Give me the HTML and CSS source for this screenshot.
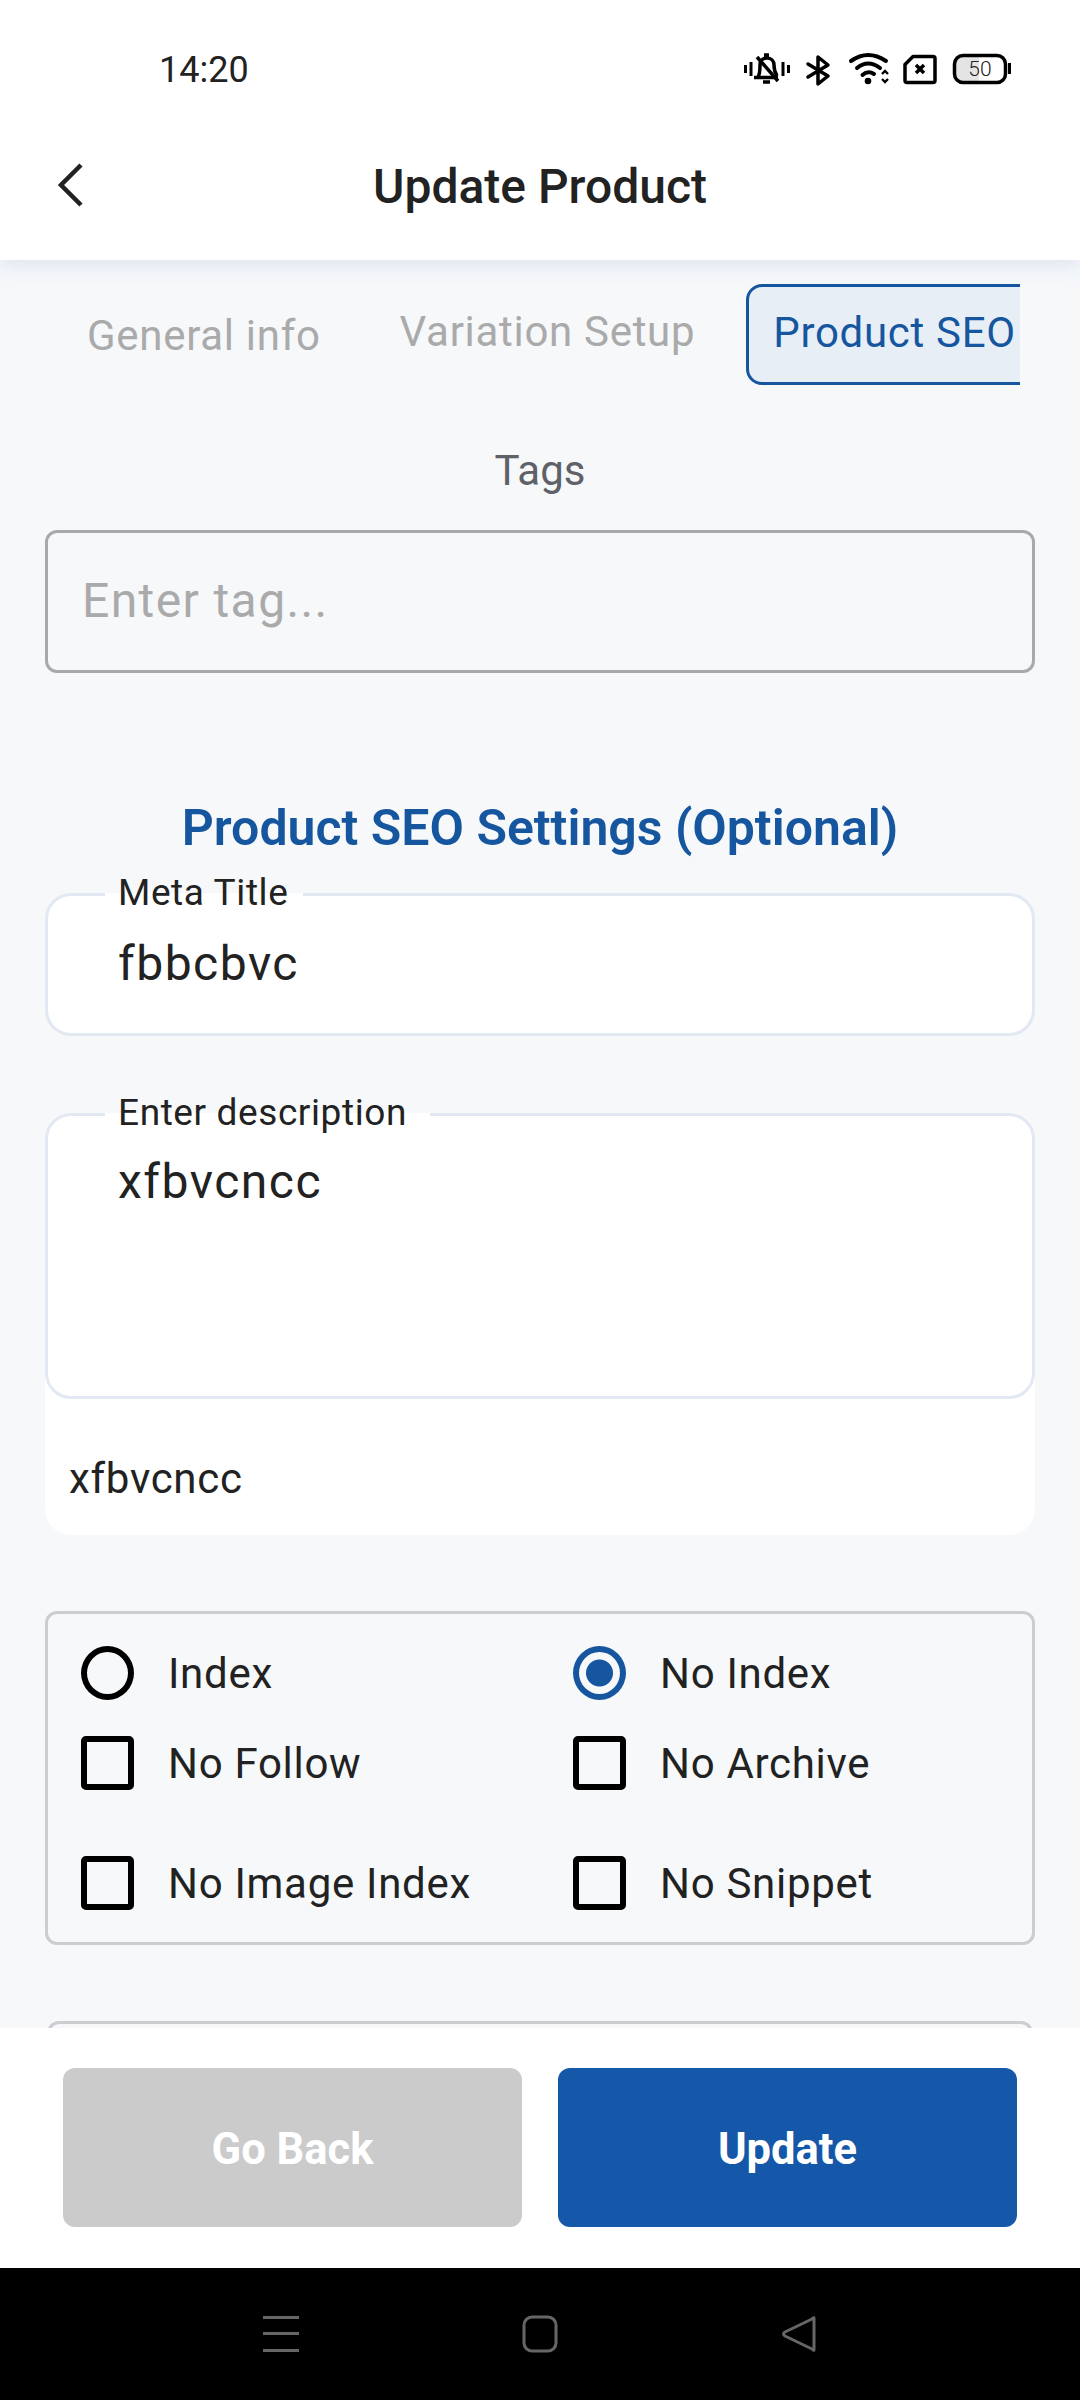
FILE: index.html
```html
<!DOCTYPE html>
<html lang="en">
<head>
<meta charset="utf-8">
<title>Update Product</title>
<link rel="stylesheet" href="styles.css">
</head>
<body>
<div class="screen">
  <div class="top">
    <div class="status">
      <span class="time">14:20</span>
      <svg class="status-icons" width="340" height="80" viewBox="0 0 340 80" fill="none" stroke="#000">
        <g stroke-width="3.500">
          <path d="M45.500 35v8M51 32v14M83 32v14M88.500 35v8" stroke-width="3"/>
          <path d="M54 47.500h24M58 47c2-3 2-7 2-12 0-4 3-7 7-7s7 3 7 7c0 5 1 8 3 11M64 25h5M63 52h7"/>
          <path d="M57 27l21 24"/>
        </g>
        <path d="M108 34l20 12-10 8V27l10 8-20 12" stroke-width="3.500" stroke-linejoin="round" stroke-linecap="round"/>
        <g stroke-width="4" stroke-linecap="round">
          <path d="M151 31Q168 19 186 31"/>
          <path d="M157 38Q168 29 180 38"/>
          <path d="M162.500 45Q168 40 174 44"/>
        </g>
        <circle cx="168" cy="51" r="3.300" fill="#000" stroke="none"/>
        <path d="M182 44l3-3 3 3M182 49l3 3 3-3" stroke-width="2.400"/>
        <path d="M213 26.500h20a2 2 0 0 1 2 2v22a2 2 0 0 1-2 2h-26a2 2 0 0 1-2-2V34.500z" stroke-width="3.500" stroke-linejoin="round"/>
        <path d="M216 35l8 8M224 35l-8 8" stroke-width="3.500"/>
        <path d="M263 26.500h16v25h-16a8 8 0 0 1-8-8v-9a8 8 0 0 1 8-8z" fill="#e4e4e4" stroke="none"/>
        <rect x="254.500" y="25.500" width="51" height="27" rx="8.500" stroke-width="3.500"/>
        <path d="M309.500 33v11" stroke-width="3"/>
        <text class="battery-text" x="280" y="46" text-anchor="middle">50</text>
      </svg>
    </div>
    <header class="app-bar">
      <svg class="back" width="28" height="44" viewBox="0 0 28 44" fill="none" stroke="#222"><path d="M25 2L5 22l20 20" stroke-width="4.500"/></svg>
      <h1 class="app-title">Update Product</h1>
    </header>
  </div>

  <main class="content">
    <div class="tabs">
      <span class="tab tab-general">General info</span>
      <span class="tab tab-variation">Variation Setup</span>
      <span class="tab tab-active">Product SEO</span>
    </div>

    <div class="tags-label">Tags</div>
    <div class="tag-input">Enter tag...</div>

    <h2 class="section-title">Product SEO Settings (Optional)</h2>

    <div class="field field-meta">
      <span class="legend">Meta Title</span>
      <span class="value">fbbcbvc</span>
    </div>

    <div class="desc-wrap">
      <div class="field field-desc">
        <span class="legend legend-wide">Enter description</span>
        <span class="value">xfbvcncc</span>
      </div>
      <div class="preview">xfbvcncc</div>
    </div>

    <div class="options">
      <div class="option"><span class="radio"></span><span>Index</span></div>
      <div class="option"><span class="radio radio-on"></span><span>No Index</span></div>
      <div class="option"><span class="check"></span><span>No Follow</span></div>
      <div class="option"><span class="check"></span><span>No Archive</span></div>
      <div class="option"><span class="check"></span><span>No Image Index</span></div>
      <div class="option"><span class="check"></span><span>No Snippet</span></div>
    </div>

    <div class="next-box"></div>
  </main>

  <footer class="actions">
    <button class="btn btn-back">Go Back</button>
    <button class="btn btn-update">Update</button>
  </footer>

  <nav class="nav">
    <svg class="nav-icon" width="36" height="38" viewBox="0 0 36 38" fill="#666"><rect y="1" width="36" height="3"/><rect y="17" width="36" height="3"/><rect y="34" width="36" height="3"/></svg>
    <svg class="nav-icon" width="36" height="38" viewBox="0 0 36 38" fill="none" stroke="#666"><rect x="2" y="2" width="32" height="34" rx="8" stroke-width="3"/></svg>
    <svg class="nav-icon" width="36" height="38" viewBox="0 0 36 38" fill="none" stroke="#666"><path d="M33 3Q33 2 31 4L4 17Q1 19 4 21L31 34Q33 36 33 35z" stroke-width="3" stroke-linejoin="round"/></svg>
  </nav>
</div>
</body>
</html>
```
FILE: styles.css
```css
* { box-sizing: border-box; }
html, body { margin: 0; padding: 0; }
body { font-family: Roboto, "Liberation Sans", sans-serif; background: #f6f8fa; color: #222; }
.screen { width: 1080px; height: 2400px; display: flex; flex-direction: column; overflow: hidden; background: #f6f8fa; }

.top { height: 260px; background: #fff; box-shadow: 0 4px 20px rgba(150, 170, 205, .28); position: relative; z-index: 1; flex: none; }
.status { height: 130px; display: flex; align-items: flex-start; justify-content: space-between; position: relative; }
.time { font-size: 36px; line-height: 42px; margin: 49px 0 0 159px; color: #222; }
.status-icons { margin: 30px 40px 0 0; }
.battery-text { font-family: Roboto, sans-serif; font-size: 21px; font-weight: 300; fill: #222; stroke: none; }

.app-bar { height: 110px; padding-top: 3px; display: flex; align-items: center; justify-content: center; position: relative; }
.back { position: absolute; left: 56px; top: 33px; }
.app-title { font-size: 48px; font-weight: 500; margin: 0; color: #222; line-height: 56px; }

.content { flex: 1; min-height: 0; overflow: hidden; padding: 24px 45px 0; }

.tabs { height: 102px; width: 975px; overflow: hidden; position: relative; display: flex; align-items: flex-start; color: #aaa; font-size: 42px; line-height: 48px; padding-left: 42px; }
.tab { white-space: nowrap; flex: none; letter-spacing: .7px; }
.tab-general { margin-top: 28px; }
.tab-variation { margin: 24px 0 0 79px; }
.tab-active { margin-left: 51px; height: 101px; width: 400px; border: 3px solid #15569f; border-radius: 16px; background: #e8eef6; color: #15569f; padding: 22px 0 0 24px; }

.tags-label { text-align: center; font-size: 42px; line-height: 48px; color: #5e6167; margin-top: 61px; }
.tag-input { margin-top: 35px; height: 143px; border: 3px solid #a9a9a9; border-radius: 12px; font-size: 48px; line-height: 136px; color: #aaa; padding-left: 34px; letter-spacing: 1.400px; }

.section-title { margin: 127px 0 0; text-align: center; font-size: 50px; line-height: 56px; font-weight: 600; color: #15569f; }

.field { border: 3px solid #e2e9f2; border-radius: 26px; background: #fff; position: relative; padding-left: 70px; }
.legend { position: absolute; left: 57px; top: -21px; padding: 0 15px 0 13px; background: linear-gradient(#f6f8fa 50%, #fff 50%); font-size: 37px; line-height: 36px; letter-spacing: .6px; color: #222; white-space: nowrap; }
.legend-wide { padding-right: 23px; }
.value { display: block; font-size: 48px; line-height: 56px; color: #222; letter-spacing: 1.500px; }
.field-meta { margin-top: 37px; height: 143px; padding-top: 40px; }
.desc-wrap { margin-top: 77px; height: 422px; background: #fff; border-radius: 26px; }
.field-desc { height: 286px; padding-top: 38px; }
.preview { font-size: 42px; line-height: 48px; color: #222; padding: 56px 0 0 24px; letter-spacing: .7px; }

.options { margin-top: 76px; height: 334px; border: 3px solid #cbcdd0; border-radius: 12px; display: grid; grid-template-columns: 492px 1fr; grid-template-rows: 90px 120px 1fr; padding: 32px 0 0 33px; }
.option { display: flex; align-items: flex-start; font-size: 42px; line-height: 56px; letter-spacing: .7px; color: #222; column-gap: 34px; }
.radio, .check { width: 53px; height: 54px; flex: none; border: 6px solid #000; }
.radio { border-radius: 50%; }
.radio-on { border-color: #15569f; background: radial-gradient(circle, #15569f 0 13px, transparent 14px); }
.check { border-radius: 5px; }

.next-box { margin: 76px 2px 0; height: 60px; border: 3px solid #cbcdd0; border-radius: 12px; }

.actions { flex: none; height: 240px; background: #fff; display: flex; justify-content: space-between; padding: 40px 63px 41px; position: relative; z-index: 1; }
.btn { width: 459px; border: 0; border-radius: 12px; padding: 3px 0 0; font-family: Roboto, sans-serif; font-size: 43.500px; font-weight: 700; color: #fff; }
.btn-back { background: #cbcbcb; }
.btn-update { background: #1557a8; }

.nav { flex: none; height: 132px; background: #000; display: flex; justify-content: center; column-gap: 223px; padding-top: 47px; }
.nav-icon { flex: none; }
```
